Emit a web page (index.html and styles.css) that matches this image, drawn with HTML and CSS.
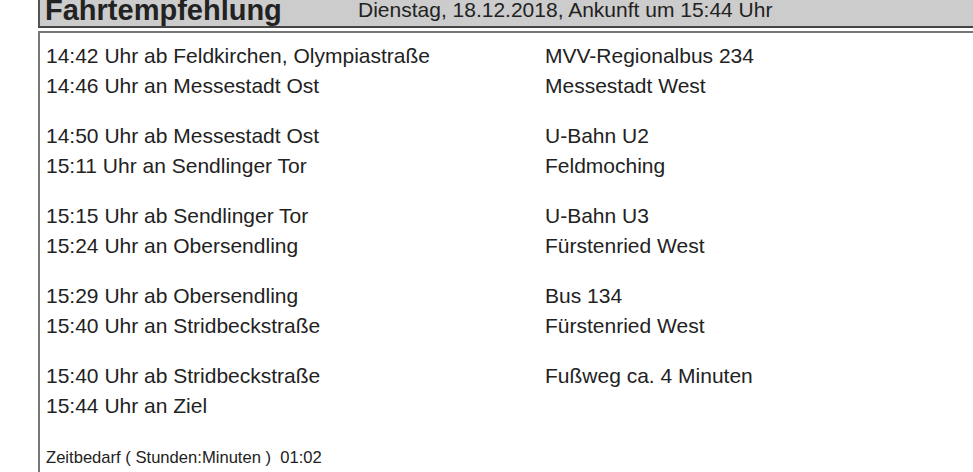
FILE: index.html
```html
<!DOCTYPE html>
<html lang="de">
<head>
<meta charset="utf-8">
<title>Fahrtempfehlung</title>
<link rel="stylesheet" href="styles.css">
</head>
<body>
<div class="page">
  <div class="header">
    <span class="title">Fahrtempfehlung</span>
    <span class="date">Dienstag, 18.12.2018, Ankunft um 15:44 Uhr</span>
  </div>
  <div class="content">
    <div class="leg">
      <div class="stop">14:42 Uhr ab Feldkirchen, Olympiastraße</div><div class="line">MVV-Regionalbus 234</div>
      <div class="stop">14:46 Uhr an Messestadt Ost</div><div class="line">Messestadt West</div>
    </div>
    <div class="leg">
      <div class="stop">14:50 Uhr ab Messestadt Ost</div><div class="line">U-Bahn U2</div>
      <div class="stop">15:11 Uhr an Sendlinger Tor</div><div class="line">Feldmoching</div>
    </div>
    <div class="leg">
      <div class="stop">15:15 Uhr ab Sendlinger Tor</div><div class="line">U-Bahn U3</div>
      <div class="stop">15:24 Uhr an Obersendling</div><div class="line">Fürstenried West</div>
    </div>
    <div class="leg">
      <div class="stop">15:29 Uhr ab Obersendling</div><div class="line">Bus 134</div>
      <div class="stop">15:40 Uhr an Stridbeckstraße</div><div class="line">Fürstenried West</div>
    </div>
    <div class="leg">
      <div class="stop">15:40 Uhr ab Stridbeckstraße</div><div class="line">Fußweg ca. 4 Minuten</div>
      <div class="stop">15:44 Uhr an Ziel</div><div class="line"></div>
    </div>
    <div class="total">Zeitbedarf ( Stunden:Minuten )&nbsp; 01:02</div>
  </div>
</div>
</body>
</html>
```
FILE: styles.css
```css
html, body {
  margin: 0;
  padding: 0;
  background: #ffffff;
}
body {
  font-family: "Liberation Sans", Arial, sans-serif;
  color: #222222;
  overflow: hidden;
  height: 472px;
}
.page {
  margin-top: -8px;
  padding-left: 38px;
}
.header {
  display: flex;
  align-items: flex-start;
  background: #cccccc;
  border: 2px solid #555555;
  border-bottom-color: #444444;
  border-right: none;
  padding: 0 0 0 5px;
  height: 36px;
  box-sizing: border-box;
}
.title {
  font-size: 29px;
  line-height: 32px;
  font-weight: bold;
  width: 313px;
}
.date {
  font-size: 21px;
  line-height: 32px;
}
.content {
  margin-top: 3px;
  border: 2px solid #777777;
  border-right: none;
  padding: 8px 0 0 6px;
}
.leg {
  display: grid;
  grid-template-columns: 499px 1fr;
  font-size: 21px;
  line-height: 30px;
  margin-bottom: 20px;
}
.total {
  font-size: 16.6px;
  line-height: 20px;
  margin-top: 27px;
  padding-bottom: 30px;
}
```
